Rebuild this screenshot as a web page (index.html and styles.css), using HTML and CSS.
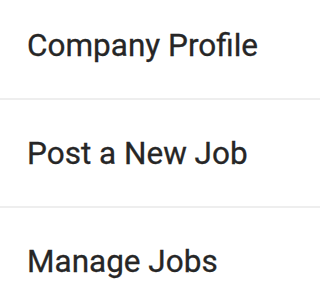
FILE: index.html
```html
<!DOCTYPE html>
<html>
<head>
<meta charset="utf-8">
<link rel="stylesheet" href="styles.css">
</head>
<body>
<ul class="menu">
  <li class="item">Company Profile</li>
  <li class="item">Post a New Job</li>
  <li class="item">Manage Jobs</li>
</ul>
</body>
</html>
```
FILE: styles.css
```css
html, body {
  margin: 0;
  padding: 0;
  background: #fff;
}
.menu {
  list-style: none;
  margin: -8px 0 0 0;
  padding: 0;
}
.item {
  height: 106px;
  display: flex;
  align-items: center;
  padding-left: 27px;
  border-bottom: 2px solid #eeeeee;
  font-family: Roboto, "Noto Sans", sans-serif;
  font-weight: 400;
  font-size: 31.5px;
  color: #262626;
  -webkit-text-stroke: 0.3px #262626;
}
```
